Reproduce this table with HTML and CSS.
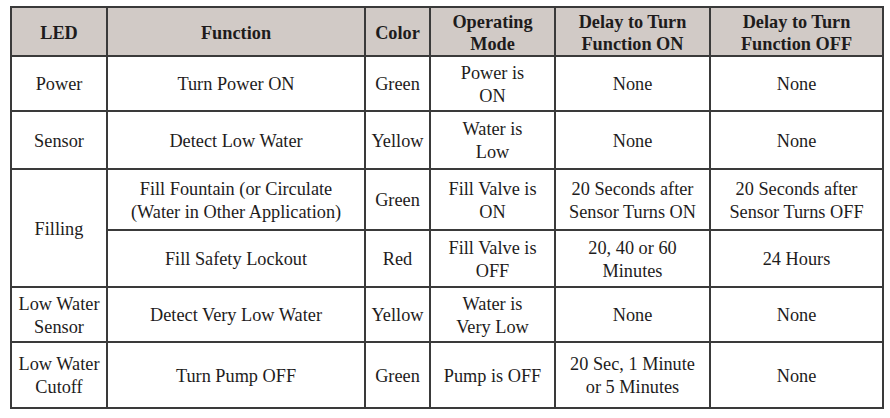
FILE: index.html
```html
<!DOCTYPE html>
<html>
<head>
<meta charset="utf-8">
<link rel="stylesheet" href="styles.css">
</head>
<body>
<table class="led-table">
  <colgroup>
    <col class="c-led">
    <col class="c-func">
    <col class="c-color">
    <col class="c-mode">
    <col class="c-on">
    <col class="c-off">
  </colgroup>
  <thead>
    <tr class="r-head">
      <th>LED</th>
      <th>Function</th>
      <th>Color</th>
      <th>Operating<br>Mode</th>
      <th>Delay to Turn<br>Function ON</th>
      <th>Delay to Turn<br>Function OFF</th>
    </tr>
  </thead>
  <tbody>
    <tr class="r-power">
      <td>Power</td>
      <td>Turn Power ON</td>
      <td>Green</td>
      <td>Power is<br>ON</td>
      <td>None</td>
      <td>None</td>
    </tr>
    <tr class="r-sensor">
      <td>Sensor</td>
      <td>Detect Low Water</td>
      <td>Yellow</td>
      <td>Water is<br>Low</td>
      <td>None</td>
      <td>None</td>
    </tr>
    <tr class="r-fill1">
      <td rowspan="2">Filling</td>
      <td>Fill Fountain (or Circulate<br>(Water in Other Application)</td>
      <td>Green</td>
      <td>Fill Valve is<br>ON</td>
      <td>20 Seconds after<br>Sensor Turns ON</td>
      <td>20 Seconds after<br>Sensor Turns OFF</td>
    </tr>
    <tr class="r-fill2">
      <td>Fill Safety Lockout</td>
      <td>Red</td>
      <td>Fill Valve is<br>OFF</td>
      <td>20, 40 or 60<br>Minutes</td>
      <td>24 Hours</td>
    </tr>
    <tr class="r-lws">
      <td>Low Water<br>Sensor</td>
      <td>Detect Very Low Water</td>
      <td>Yellow</td>
      <td>Water is<br>Very Low</td>
      <td>None</td>
      <td>None</td>
    </tr>
    <tr class="r-lwc">
      <td>Low Water<br>Cutoff</td>
      <td>Turn Pump OFF</td>
      <td>Green</td>
      <td>Pump is OFF</td>
      <td>20 Sec, 1 Minute<br>or 5 Minutes</td>
      <td>None</td>
    </tr>
  </tbody>
</table>
</body>
</html>
```
FILE: styles.css
```css
html, body {
  margin: 0;
  padding: 0;
  background: #ffffff;
}

body {
  padding: 6px 0 0 10px;
  font-family: "Liberation Serif", "Times New Roman", "DejaVu Serif", serif;
  color: #1e1c1c;
}

.led-table {
  border-collapse: collapse;
  table-layout: fixed;
  width: 872px;
  border: 2px solid #3a3a3a;
}

.c-led { width: 96px; }
.c-func { width: 258px; }
.c-color { width: 65px; }
.c-mode { width: 125px; }
.c-on { width: 155px; }
.c-off { width: 173px; }

.led-table th,
.led-table td {
  border: 2px solid #3a3a3a;
  padding: 2px 0 0;
  text-align: center;
  vertical-align: middle;
  font-size: 18.3px;
  line-height: 23px;
}

.led-table th {
  background: #d1cac6;
  font-weight: bold;
  line-height: 22px;
}

.r-head { height: 49px; }
.r-power { height: 55px; }
.r-sensor { height: 58px; }
.r-fill1 { height: 61px; }
.r-fill2 { height: 57px; }
.r-lws { height: 55px; }
.r-lwc { height: 66px; }
```
